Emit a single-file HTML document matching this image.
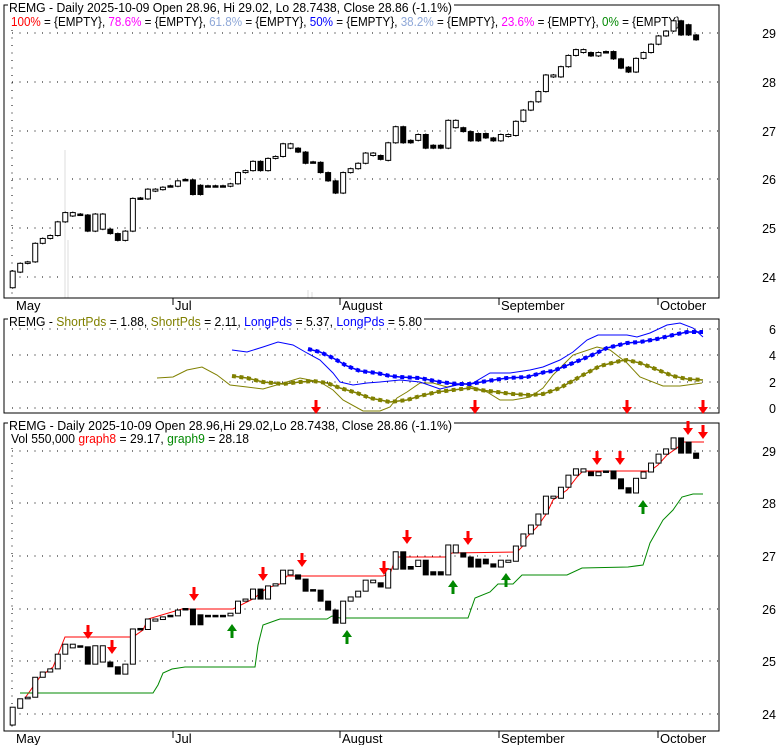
<!DOCTYPE html>
<html><head><meta charset="utf-8"><style>
html,body{margin:0;padding:0;background:#fff;width:780px;height:745px;overflow:hidden}
svg{display:block}
text{font-family:"Liberation Sans",Arial,sans-serif;font-size:12.5px}
.ax{font-size:13px}
</style></head><body>
<svg id="s" width="780" height="745" xmlns="http://www.w3.org/2000/svg">
<g id="bg"></g>
<!-- panel 1 -->
<rect x="4" y="5" width="715" height="293" fill="none" stroke="#000"/>
<rect x="8" y="1" width="446" height="11" fill="#fff"/>
<text x="9" y="12" textLength="443" lengthAdjust="spacingAndGlyphs">REMG - Daily 2025-10-09 Open 28.96, Hi 29.02, Lo 28.7438, Close 28.86 (-1.1%)</text>
<text x="11" y="26" textLength="669" lengthAdjust="spacingAndGlyphs"><tspan fill="#f00">100%</tspan> = {EMPTY}, <tspan fill="#f0f">78.6%</tspan> = {EMPTY}, <tspan fill="#8fa8d8">61.8%</tspan> = {EMPTY}, <tspan fill="#00f">50%</tspan> = {EMPTY}, <tspan fill="#8fa8d8">38.2%</tspan> = {EMPTY}, <tspan fill="#f0f">23.6%</tspan> = {EMPTY}, <tspan fill="#080">0%</tspan> = {EMPTY}</text>
<g class="ax" text-anchor="end">
<text x="776" y="38">29</text><text x="776" y="87">28</text><text x="776" y="136">27</text><text x="776" y="184">26</text><text x="776" y="233">25</text><text x="776" y="282">24</text>
</g>
<g stroke="#000"><line x1="173" y1="298" x2="173" y2="305"/><line x1="340" y1="298" x2="340" y2="305"/><line x1="499" y1="298" x2="499" y2="305"/><line x1="658" y1="298" x2="658" y2="305"/></g>
<text x="16" y="310" class="ax">May</text><text x="175" y="310" class="ax">Jul</text><text x="342" y="310" class="ax">August</text><text x="501" y="310" class="ax">September</text><text x="660" y="310" class="ax">October</text>
<!-- panel 2 -->
<rect x="4" y="319" width="715" height="94" fill="none" stroke="#000"/>
<rect x="8" y="315" width="416" height="10" fill="#fff"/>
<text x="9" y="326" textLength="413" lengthAdjust="spacingAndGlyphs"><tspan>REMG - </tspan><tspan fill="#808000">ShortPds</tspan> = 1.88, <tspan fill="#808000">ShortPds</tspan> = 2.11, <tspan fill="#00f">LongPds</tspan> = 5.37, <tspan fill="#00f">LongPds</tspan> = 5.80</text>
<g class="ax" text-anchor="end"><text x="776" y="334">6</text><text x="776" y="360">4</text><text x="776" y="387">2</text><text x="776" y="413">0</text></g>
<!-- panel 3 -->
<rect x="4" y="423" width="715" height="308" fill="none" stroke="#000"/>
<rect x="8" y="419" width="446" height="10" fill="#fff"/>
<text x="9" y="430" textLength="443" lengthAdjust="spacingAndGlyphs">REMG - Daily 2025-10-09 Open 28.96,Hi 29.02,Lo 28.7438, Close 28.86 (-1.1%)</text>
<text x="11" y="443" textLength="238" lengthAdjust="spacingAndGlyphs">Vol 550,000 <tspan fill="#f00">graph8</tspan> = 29.17, <tspan fill="#080">graph9</tspan> = 28.18</text>
<g class="ax" text-anchor="end"><text x="776" y="456">29</text><text x="776" y="508">28</text><text x="776" y="561">27</text><text x="776" y="614">26</text><text x="776" y="666">25</text><text x="776" y="719">24</text></g>
<g stroke="#000"><line x1="173" y1="731" x2="173" y2="738"/><line x1="340" y1="731" x2="340" y2="738"/><line x1="499" y1="731" x2="499" y2="738"/><line x1="658" y1="731" x2="658" y2="738"/></g>
<text x="16" y="743" class="ax">May</text><text x="175" y="743" class="ax">Jul</text><text x="342" y="743" class="ax">August</text><text x="501" y="743" class="ax">September</text><text x="660" y="743" class="ax">October</text>
<g id="fg"></g>
</svg>
<script>
var NS="http://www.w3.org/2000/svg",bg=document.getElementById('bg'),fg=document.getElementById('fg');
function el(p,t,a){var e=document.createElementNS(NS,t);for(var k in a)e.setAttribute(k,a[k]);p.appendChild(e);return e;}
[33,82,131,179,228,277].forEach(function(y){el(bg,'line',{x1:12,x2:719,y1:y,y2:y,stroke:'#000','stroke-dasharray':'1 6.5'});});
[329,355,382,408].forEach(function(y){el(bg,'line',{x1:12,x2:719,y1:y,y2:y,stroke:'#000','stroke-dasharray':'1 6.5'});});
[451,503,556,609,661,714].forEach(function(y){el(bg,'line',{x1:12,x2:719,y1:y,y2:y,stroke:'#000','stroke-dasharray':'1 6.5'});});
el(bg,'line',{x1:12,x2:12,y1:30,y2:298,stroke:'#000','stroke-dasharray':'1 6.5'});
el(bg,'line',{x1:12,x2:12,y1:448,y2:731,stroke:'#000','stroke-dasharray':'1 6.5'});
[[65,150],[68,240],[308,290],[312,292]].forEach(function(v){el(bg,'line',{x1:v[0],x2:v[0],y1:v[1],y2:298,stroke:'#e8e8e8','stroke-width':1.5});});
var D=[[23.78,24.12],[24.1,24.28],[24.28,24.31],[24.31,24.69],[24.69,24.79],[24.79,24.85],[24.85,25.13],[25.13,25.32],[25.25,25.32],[25.29,25.27],
[25.27,24.94],[24.94,25.29],[24.98,25.29],[24.98,24.89],[24.89,24.75],[24.75,24.94],[24.94,25.61],[25.62,25.6],[25.6,25.8],[25.76,25.8],
[25.79,25.84],[25.87,25.86],[25.86,25.97],[26.0,25.99],[25.99,25.69],[25.88,25.69],[25.87,25.86],[25.87,25.86],[25.87,25.86],[25.86,25.91],
[25.91,26.14],[26.14,26.18],[26.18,26.37],[26.37,26.18],[26.18,26.43],[26.43,26.47],[26.47,26.73],[26.64,26.73],[26.64,26.56],[26.56,26.33],
[26.36,26.35],[26.35,26.14],[26.14,25.97],[25.97,25.72],[25.72,26.14],[26.14,26.22],[26.22,26.33],[26.33,26.54],[26.49,26.54],[26.49,26.41],
[26.39,26.75],[26.75,27.08],[27.08,26.75],[26.8,26.75],[26.8,26.92],[26.92,26.64],[26.7,26.64],[26.7,26.64],[26.64,27.21],[27.06,27.21],
[27.06,26.98],[26.98,26.79],[26.94,26.79],[26.94,26.85],[26.85,26.79],[26.79,26.92],[26.88,26.92],[26.9,27.19],[27.19,27.42],[27.42,27.59],
[27.59,27.8],[27.8,28.14],[28.1,28.14],[28.1,28.31],[28.31,28.54],[28.54,28.66],[28.6,28.66],[28.6,28.53],[28.53,28.6],[28.62,28.6],
[28.62,28.47],[28.47,28.28],[28.3,28.2],[28.2,28.48],[28.48,28.6],[28.6,28.77],[28.77,28.94],[28.94,29.04],[29.04,29.25],[29.25,28.96],
[29.17,28.96],[28.96,28.86]];
function cand(i,o,c,Y,wick){var x=12.7+7.51*i,t=Y(Math.max(o,c)),b=Y(Math.min(o,c)),h=Math.max(b-t,1.5);
 if(wick){el(fg,'line',{x1:x,x2:x,y1:t-1,y2:b+1,stroke:'#000'});}
 if(c>=o){el(fg,'rect',{x:x-2.5,y:t,width:5,height:h,fill:'#fff',stroke:'#000'});}
 else{el(fg,'rect',{x:x-3,y:t-0.5,width:6,height:h+1,fill:'#000'});}}
var Y1=function(p){return 33+(29-p)*48.8;},Y3=function(p){return 451+(29-p)*52.5;};
function pl(pts,col,w,dash){var a={points:pts,fill:'none',stroke:col,'stroke-width':w||1};if(dash)a['stroke-dasharray']=dash;el(fg,'polyline',a);}
pl("25,698 40,677 53,667 65,637 133,637 143,630 148,619 182,609 233,609 253,599 267,588 280,584 287,576 383,576 390,574 396,557 445,557 452,553 517,552 522,547 527,537 537,527 547,513 553,500 567,490 577,477 583,471 650,471 658,465 667,455 677,448 683,442 704,442","#f00");
pl("20,693 153,693 158,685 163,673 172,669 185,667 255,667 258,645 263,625 277,620 280,619 327,619 332,616 340,618 390,618 468,618 475,598 490,592 498,584 513,584 522,575 567,575 582,568 628,567 643,565 650,543 663,520 673,510 682,497 693,494 703,494","#080");
D.forEach(function(d,i){cand(i,d[0],d[1],Y1,true);cand(i,d[0],d[1],Y3,false);});
pl("157,378 173,377 187,370 202,367 217,375 230,385 247,387 263,389 280,384 300,378 320,382 333,390 343,400 363,411 380,411 390,407 397,398 407,392 420,383 433,383 447,387 463,383 473,387 487,392 500,400 513,400 530,397 543,388 553,375 573,355 597,347 610,350 627,363 640,377 663,386 680,386 702,383","#808000");
pl("232,350 247,352 263,347 278,342 293,345 307,353 320,360 333,373 340,382 353,385 367,383 380,382 400,380 420,382 440,389 457,385 473,383 490,373 510,373 530,370 543,367 560,360 573,352 587,340 598,335 627,335 637,337 650,333 667,325 680,323 693,328 703,337","#00f");
var oq="232,376 247,378 263,382 283,384 300,382 313,381 327,383 340,388 357,393 370,398 390,402 407,400 420,396 437,392 453,390 470,388 480,390 497,392 513,394 530,395 543,394 560,388 583,375 600,366 620,361 627,360 640,363 653,368 673,376 687,379 703,380";
var bq="308,349 320,352 333,358 347,366 360,371 377,373 390,376 400,377 420,378 440,382 457,384 470,384 487,381 507,378 527,377 545,372 553,371 573,363 590,356 607,348 627,343 640,342 657,339 673,335 687,332 703,332";
pl(oq,"#808000",1.5);pl(oq,"#808000",4,"4 3.5");pl(bq,"#00f",1.5);pl(bq,"#00f",4,"4 3.5");
function down(cx,cy,col){var t=cy+7;el(fg,'polygon',{points:[cx-1.5,t-14,cx+1.5,t-14,cx+1.5,t-7,cx+5,t-7,cx,t,cx-5,t-7,cx-1.5,t-7].join(' '),fill:col});}
function up(cx,cy,col){var t=cy-7;el(fg,'polygon',{points:[cx-1.5,t+14,cx+1.5,t+14,cx+1.5,t+7,cx+5,t+7,cx,t,cx-5,t+7,cx-1.5,t+7].join(' '),fill:col});}
[[88,632],[112,647],[194,594],[263,574],[302,560],[384,568],[407,537],[468,538],[597,458],[620,458],[688,428],[703,432],[316,407],[475,407],[627,407],[703,407]].forEach(function(a){down(a[0],a[1],'#f00');});
[[232,631],[347,637],[453,587],[506,580],[643,507]].forEach(function(a){up(a[0],a[1],'#080');});
</script>
</body></html>
